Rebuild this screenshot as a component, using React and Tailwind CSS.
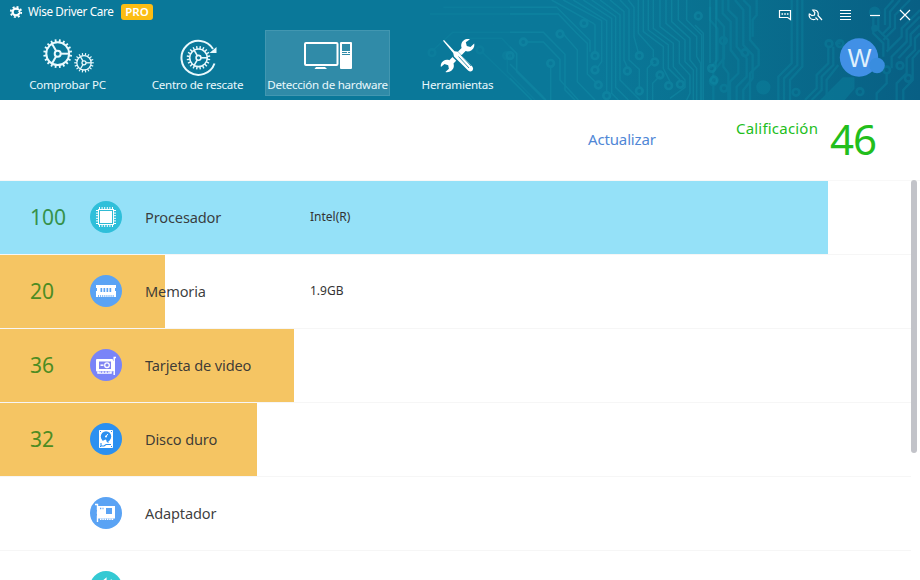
import clsx from "clsx";

const range = (n) => Array.from({ length: n }, (_, i) => i);

function Gear({ cx, cy, r, teeth = 18, tooth = 3, hub = 3, width = 2 }) {
  return (
    <g
      transform={`translate(${cx} ${cy})`}
      fill="none"
      stroke="currentColor"
      strokeWidth={width}
    >
      <circle r={r} />
      <circle r={hub} />
      {range(teeth).map((i) => (
        <path
          key={i}
          d={`M0 ${-r}V${-r - tooth}`}
          strokeWidth={width * 0.9}
          transform={`rotate(${(360 / teeth) * (i + 0.5)})`}
        />
      ))}
      {[90, 210, 330].map((a) => (
        <path key={a} d={`M0 ${-hub}V${-r}`} transform={`rotate(${a})`} />
      ))}
    </g>
  );
}

function ScanIcon() {
  return (
    <>
      <Gear cx={52.7} cy={23.7} r={11.4} teeth={20} hub={3} />
      <Gear cx={79} cy={32.8} r={7.2} teeth={18} tooth={2.6} hub={2} width={1.3} />
    </>
  );
}

function RescueIcon() {
  return (
    <>
      <Gear cx={63.5} cy={27.8} r={8.8} teeth={20} hub={2.4} width={1.6} />
      <path
        d="M79.500 33.500A17 17 0 1 1 78 19"
        fill="none"
        stroke="currentColor"
        strokeWidth="2"
      />
      <path d="M81.500 17v6h-7z" fill="currentColor" />
    </>
  );
}

function HardwareIcon() {
  return (
    <g fill="#fff">
      <rect x="40" y="13" width="32.500" height="22" rx="1" fill="none" stroke="#fff" strokeWidth="2" />
      <path d="M51 37h9l2 2H49.500z" />
      <path
        fillRule="evenodd"
        d="M76 12h10a1 1 0 0 1 1 1v25a1 1 0 0 1-1 1h-10a1 1 0 0 1-1-1v-25a1 1 0 0 1 1-1zM77 14v7h8v-7zM77 22v1h5v-1zM83 22v1h2v-1zM77 24v1h8v-1z"
      />
    </g>
  );
}

function ToolsIcon() {
  return (
    <g transform="translate(-1.500 0)">
      <path
        d="M76.500 9.300c-3.800-1.200-8 1-8.700 5-.3 1.500 0 2.600.3 3.600L55.800 30.200c-3.400-1.300-7.200.4-8.300 3.800-.3 1.100-.3 2.200-.1 3l3.600-2.900 3.700 1.100.7 3.600-3.500 3.200c4 .9 7.600-1.700 8.400-5.300.2-1.300 0-2.500-.3-3.300l12.100-12.300c3.300 1.100 7.400-.7 8.500-4.400.3-1.100.3-2.200.1-3.200l-3.700 3.400-3.700-1-1-3.600z"
        fill="#fff"
      />
      <path d="M52 14.500L64 26.500" stroke="#0a7899" strokeWidth="4" />
      <path d="M61.500 24.500l2.500-2.500 15.500 15.500v4.500h-4.500L59.500 26.500z" fill="#0a7899" stroke="#0a7899" strokeWidth="1.500" />
      <path d="M49.500 10.800l1-.8 10.500 11.200 3.500.6 14.300 14.700c1.200 1.500 1 3.200 0 4.300-1.200 1-2.800 1-4.200-.2L60.500 26.600l-.8-3.700z" fill="#fff" />
      <path d="M65 26.500L75.500 38M67.500 25L77.500 36" stroke="#0a7899" strokeWidth=".8" />
    </g>
  );
}

const tabs = [
  { label: "Comprobar PC", icon: ScanIcon },
  { label: "Centro de rescate", icon: RescueIcon },
  { label: "Detección de hardware", icon: HardwareIcon, active: true },
  { label: "Herramientas", icon: ToolsIcon },
];

function CpuIcon() {
  return (
    <>
      <rect x="8" y="8" width="16" height="16" fill="#fff" />
      <rect x="9.500" y="9.500" width="13" height="13" fill="none" stroke="#2fbad3" />
      {range(6).map((i) => (
        <path
          key={i}
          d={`M${9.5 + i * 2.6} 6v2M${9.5 + i * 2.6} 24v2M6 ${9.5 + i * 2.6}h2M24 ${9.5 + i * 2.6}h2`}
          stroke="#fff"
        />
      ))}
    </>
  );
}

function MemoryIcon() {
  return (
    <>
      <path d="M6 10h20v3h-1v3h1v6H6v-6h1v-3H6z" fill="#fff" />
      {range(4).map((i) => (
        <rect key={i} x={10.5 + i * 3} y="13" width="1.700" height="4" fill="#5aa3f4" />
      ))}
      {range(8).map((i) => (
        <path key={i} d={`M${8.5 + i * 2.1} 20v2`} stroke="#5aa3f4" strokeWidth=".8" />
      ))}
    </>
  );
}

function VideoIcon() {
  return (
    <>
      <rect x="6" y="10" width="17" height="12.500" rx="1" fill="#fff" />
      <path d="M8 22.500v1.500h13v-1.500M26 8.500h-1.800V26" fill="none" stroke="#fff" strokeWidth="1.500" />
      <rect x="23" y="12" width="2" height="10" fill="#fff" />
      <rect x="9" y="12.500" width="12" height="7.500" fill="#7f83f2" />
      <circle cx="17" cy="16.200" r="2.300" fill="none" stroke="#fff" strokeWidth="1.300" />
      <path d="M10.500 16.200h3" stroke="#fff" strokeWidth="1.500" />
      <path d="M11.500 22v2M14.500 22v2M17.500 22v2" stroke="#7f83f2" strokeWidth=".7" />
    </>
  );
}

function DiskIcon() {
  return (
    <>
      <rect x="9" y="7" width="14" height="18" rx=".8" fill="#fff" />
      <circle cx="16" cy="13.500" r="5.200" fill="#2b90f0" />
      <path d="M16 13.500l1.800-2.500" stroke="#fff" />
      <circle cx="16" cy="13.500" r="1" fill="#fff" />
      <path d="M12.500 18l3-1.500 3 2.500h-5z" fill="#fff" />
      <path d="M11 20v3h3l2-1.500h5M16.500 17.500l2 2" fill="none" stroke="#2b90f0" strokeWidth="1.100" />
      <path d="M10 8.500h1M21 8.500h1M10 23.500h1M21 23.500h1" stroke="#2b90f0" />
    </>
  );
}

function AdapterIcon() {
  return (
    <>
      <rect x="8" y="9" width="17" height="12.500" fill="#fff" />
      <rect x="16" y="11" width="6" height="6" fill="#5aa3f4" />
      <path d="M5 7.500h2.500V25" fill="none" stroke="#fff" strokeWidth="1.400" />
      <path d="M10 22.300h14" stroke="#fff" strokeWidth="1.500" strokeDasharray="1.500 .8" />
      <path d="M10 11.500h1.300M12.500 11.500h1" stroke="#5aa3f4" strokeWidth="1.300" />
      <path d="M6.500 13v1.500M6.500 17v1.500" stroke="#5aa3f4" />
    </>
  );
}

function SoundIcon() {
  return (
    <path
      d="M12 11l4-3.500V24l-4-3H9V11zM18.500 11q3 4 0 9M21 8.500q5 7 0 14"
      fill="none"
      stroke="#fff"
      strokeWidth="1.200"
    />
  );
}

const rows = [
  { score: 100, width: 828, bar: "bg-[#95e1f8]", scoreColor: "text-[#36914b]", label: "Procesador", value: "Intel(R)", disc: "bg-[#2fbfda]", icon: CpuIcon },
  { score: 20, width: 165, bar: "bg-[#f5c563]", scoreColor: "text-[#4d8c22]", label: "Memoria", value: "1.9GB", disc: "bg-[#5aa3f4]", icon: MemoryIcon },
  { score: 36, width: 294, bar: "bg-[#f5c563]", scoreColor: "text-[#4d8c22]", label: "Tarjeta de video", disc: "bg-[#7984f8]", icon: VideoIcon },
  { score: 32, width: 257, bar: "bg-[#f5c563]", scoreColor: "text-[#4d8c22]", label: "Disco duro", disc: "bg-[#2b90f0]", icon: DiskIcon },
  { width: 0, label: "Adaptador", disc: "bg-[#5aa3f4]", icon: AdapterIcon },
  { width: 0, label: "", disc: "bg-[#34c9d3]", icon: SoundIcon },
];

const traces = [
  "M0 22H140L240 122V155",
  "M0 42H145L200 100L232 130V222L262 252",
  "M0 97H100L165 163V270L195 300",
  "M52 126H100L150 178V240L205 300",
  "M0 140L20 160V215L105 300",
  "M0 192L108 300",
  "M0 235L65 300",
  "M122 200V300",
  "M160 102L202 150V245L255 300",
  "M125 0L250 70L255 75V155",
  "M160 0L275 62V185L262 203",
  "M190 0L290 62V275",
  "M220 0L305 55V280L325 300",
  "M245 0L317 50V262L355 300",
  "M270 0L330 45V240L390 300",
  "M300 0L342 35V180L352 202",
  "M330 0L357 28V180L388 208V262",
  "M355 0L372 22V110L385 158",
  "M385 0V100L430 150V172",
  "M400 0V95L460 140V205L480 245",
  "M415 0V90L475 135V205L510 240",
  "M430 0V85L490 130V200L525 240V262L480 295",
  "M450 0V80L508 125V190L540 225V280L530 300",
  "M468 0V70L525 120V185L550 210V300",
  "M485 0V65L540 115V180L560 205V300",
  "M505 0V60L560 110V170L572 190V300",
  "M530 0V60L575 105V300",
  "M555 75L580 100V300",
  "M600 0V190",
  "M618 0V200",
  "M412 300V205L430 185",
  "M428 300V250L450 228",
];

const pads = [
  [222, 70], [150, 102], [40, 126], [122, 190], [255, 167], [255, 210], [265, 255],
  [290, 287], [352, 213], [388, 167], [388, 273], [434, 186], [450, 225], [476, 257],
  [511, 253], [565, 48], [605, 205], [612, 240], [0, 167],
];

const rightTraces = [
  "M0 20V60L22 85V180L0 205",
  "M20 0V55L42 80V175L10 215V300",
  "M38 0V40L62 65V150L85 180V220L60 245V300",
  "M55 0V30L80 55V140L110 175V230L80 260V300",
  "M75 0L100 30V135L128 165V235L100 270V300",
  "M100 0L120 20V120L146 150V195L120 220V300",
  "M140 0V45L128 60V110",
  "M40 132V200L55 220V300",
  "M245 0V190L205 230V300",
  "M262 0V195L222 235V300",
  "M277 0V200L240 240V300",
  "M355 140V190L320 225V265L285 300",
  "M375 130H392M370 140V195L335 230V270L305 300",
  "M385 195L350 240V300",
  "M490 50V100L520 130V170",
  "M505 50V90L535 120V150",
  "M630 30L575 85V110L530 155",
  "M630 50L590 90V125L545 170V205",
  "M630 75L602 103V135L565 175",
  "M630 100L615 115V150L590 175V220L560 250V300",
  "M630 150L608 175V240L580 270V300",
  "M570 0L540 35V80L515 105",
  "M600 0L555 45V85L520 120",
  "M550 0L525 28V75",
  "M530 220V250L500 280V300",
];

const rightPads = [
  [40, 122], [105, 158], [10, 245], [42, 265], [357, 131], [390, 131], [570, 197],
  [530, 210], [258, 277], [450, 275], [595, 235],
];

// Circuit board pattern behind the header, it fades in from the left
function Circuit() {
  return (
    <svg className="absolute inset-0" width="920" height="100" fill="none">
      <g stroke="#1492ab" strokeWidth="4.500" opacity=".42">
        <g transform="translate(510 0) scale(.3333)">
          {traces.map((d) => (
            <path key={d} d={d} />
          ))}
          {pads.map(([x, y]) => (
            <circle key={`${x}-${y}`} cx={x} cy={y} r="10" strokeWidth="8" />
          ))}
        </g>
        <g transform="translate(410 0) scale(.3333)" opacity=".5">
          <path d="M70 150L128 97H300M170 115H275L320 162V212L400 290M292 175V215L375 300M215 155L365 300M100 22H300M60 42H300" />
          <circle cx="66" cy="158" r="10" strokeWidth="8" />
          <circle cx="210" cy="150" r="10" strokeWidth="8" />
          <circle cx="290" cy="167" r="10" strokeWidth="8" />
        </g>
      </g>
      <g transform="translate(710 0) scale(.3333)" stroke="#0d8ba6" strokeWidth="7" opacity=".34">
        {rightTraces.map((d) => (
          <path key={d} d={d} />
        ))}
        {rightPads.map(([x, y]) => (
          <circle key={`${x}-${y}`} cx={x} cy={y} r="10" strokeWidth="8" />
        ))}
        <g fill="#0d8ba6">
          <circle cx="160" cy="262" r="18" />
          <circle cx="494" cy="37" r="14" />
          <circle cx="494" cy="85" r="7" />
          <path d="M335 300L400 235H430V265L400 300z" />
        </g>
      </g>
    </svg>
  );
}

function WindowButtons() {
  return (
    <svg className="absolute left-[775px] top-[4px]" width="145" height="22" fill="none" stroke="#fff" strokeWidth="1.200">
      <path d="M4.500 6.500h11v9l-2.800-2H4.500z" />
      <path d="M6.500 10h1.600M9.200 10h1.600M11.900 10h1.600" strokeWidth="1.600" />
      <path d="M34.300 9.700l2.700 2 2.500-.7.300-2.500-2-2.300c2.600-.7 5 .6 5.400 3 .1 1 0 1.600-.2 2.300l4 4.500M34.300 9.700c-.8 3 1 5.800 4.200 6 .8 0 1.300-.1 2-.4M40.500 13.500l2.500 2.500" />
      <path d="M65 6.500h11M65 9.500h11M65 12.500h11M65 15.500h11" />
      <path d="M95 11.500h10" />
      <path d="M125 6l10 10M135 6l-10 10" />
    </svg>
  );
}

function Header() {
  return (
    <header className="relative h-[100px] shrink-0 overflow-hidden bg-linear-to-r from-[#0a7899] from-65% via-[#09708f] via-78% to-[#085f84]">
      <Circuit />
      <div className="relative flex h-[24px] items-center pl-[9px]">
        <svg width="14" height="14" viewBox="0 0 14 14" className="text-white">
          <circle cx="7" cy="7" r="5.200" fill="none" stroke="currentColor" strokeWidth="1.800" strokeDasharray="2 2.080" />
          <circle cx="7" cy="7" r="3.400" fill="none" stroke="currentColor" strokeWidth="2.200" />
          <path d="M7 7.300h3M7 5.500h2.500" stroke="#17809f" strokeWidth="1" />
        </svg>
        <span className="ml-[5px] w-[93px] whitespace-nowrap text-[11.7px] tracking-[-0.35px] text-white">
          Wise Driver Care
        </span>
        <span className="flex h-[16px] w-[32px] items-center justify-center rounded-[3px] bg-[#fcbd13] text-[11.5px] font-semibold text-white">
          PRO
        </span>
      </div>
      <nav className="relative mt-[6px] flex gap-[5px] pl-[5px]">
        {tabs.map(({ label, icon: Icon, active }) => (
          <div
            key={label}
            className={clsx(
              "flex h-[66px] w-[125px] flex-col items-center text-[#e9f9fd]",
              active && "bg-[#308ba8] outline -outline-offset-1 outline-[#4297b1]"
            )}
          >
            <svg width="125" height="46" className="shrink-0">
              <Icon />
            </svg>
            <span className="whitespace-nowrap text-[11.6px] leading-[18px] tracking-[-0.25px]">
              {label}
            </span>
          </div>
        ))}
      </nav>
      <WindowButtons />
      <svg className="absolute left-[838px] top-[36px]" width="50" height="44">
        <circle cx="21" cy="21.500" r="19.200" fill="#4190e6" />
        <circle cx="39" cy="29.500" r="7.800" fill="#398ddf" />
        <text x="21.500" y="31" textAnchor="middle" fontSize="25" fill="#dff0fd" fontFamily="Liberation Sans">
          W
        </text>
      </svg>
    </header>
  );
}

function Row({ score, width, bar, scoreColor, label, value, disc, icon: Icon }) {
  return (
    <div className="relative flex h-[74px] shrink-0 items-center border-b border-[#f6f6f6]">
      <div className={clsx("absolute left-0 top-0 h-[73px]", bar)} style={{ width }} />
      <span className={clsx("relative ml-[30px] w-[60px] text-[21px]", scoreColor)}>
        {score}
      </span>
      <span className={clsx("relative mb-px h-8 w-8 rounded-full", disc)}>
        <svg width="32" height="32">
          <Icon />
        </svg>
      </span>
      <span className="relative ml-[23px] w-[165px] text-[14.6px] tracking-[-0.15px] text-[#333]/95">
        {label}
      </span>
      <span className="relative mb-px text-[12px] text-[#333]">{value}</span>
    </div>
  );
}

export default function App() {
  return (
    <div className="flex h-[580px] w-[920px] flex-col overflow-hidden bg-white font-['Noto_Sans',sans-serif]">
      <Header />
      <div className="flex h-[81px] shrink-0 items-start border-b border-[#f8f8f8]">
        <span className="ml-[588px] mt-[28px] w-[148px] text-[15px] tracking-[-0.15px] text-[#5087d6]">
          Actualizar
        </span>
        <span className="mt-[17px] w-[94px] text-[15px] tracking-[0.2px] text-[#22be1c]">
          Calificación
        </span>
        <span className="mt-[9px] text-[42px] leading-[60px] tracking-[-1px] text-[#22be1c]">46</span>
      </div>
      <main className="flex min-h-0 flex-1">
        <div className="flex w-[911px] flex-col overflow-hidden">
          {rows.map((row) => (
            <Row key={row.disc + row.label} {...row} />
          ))}
        </div>
        <div className="-mt-px h-[273px] w-[6px] rounded-full bg-[#c2c3c9]" />
      </main>
    </div>
  );
}
